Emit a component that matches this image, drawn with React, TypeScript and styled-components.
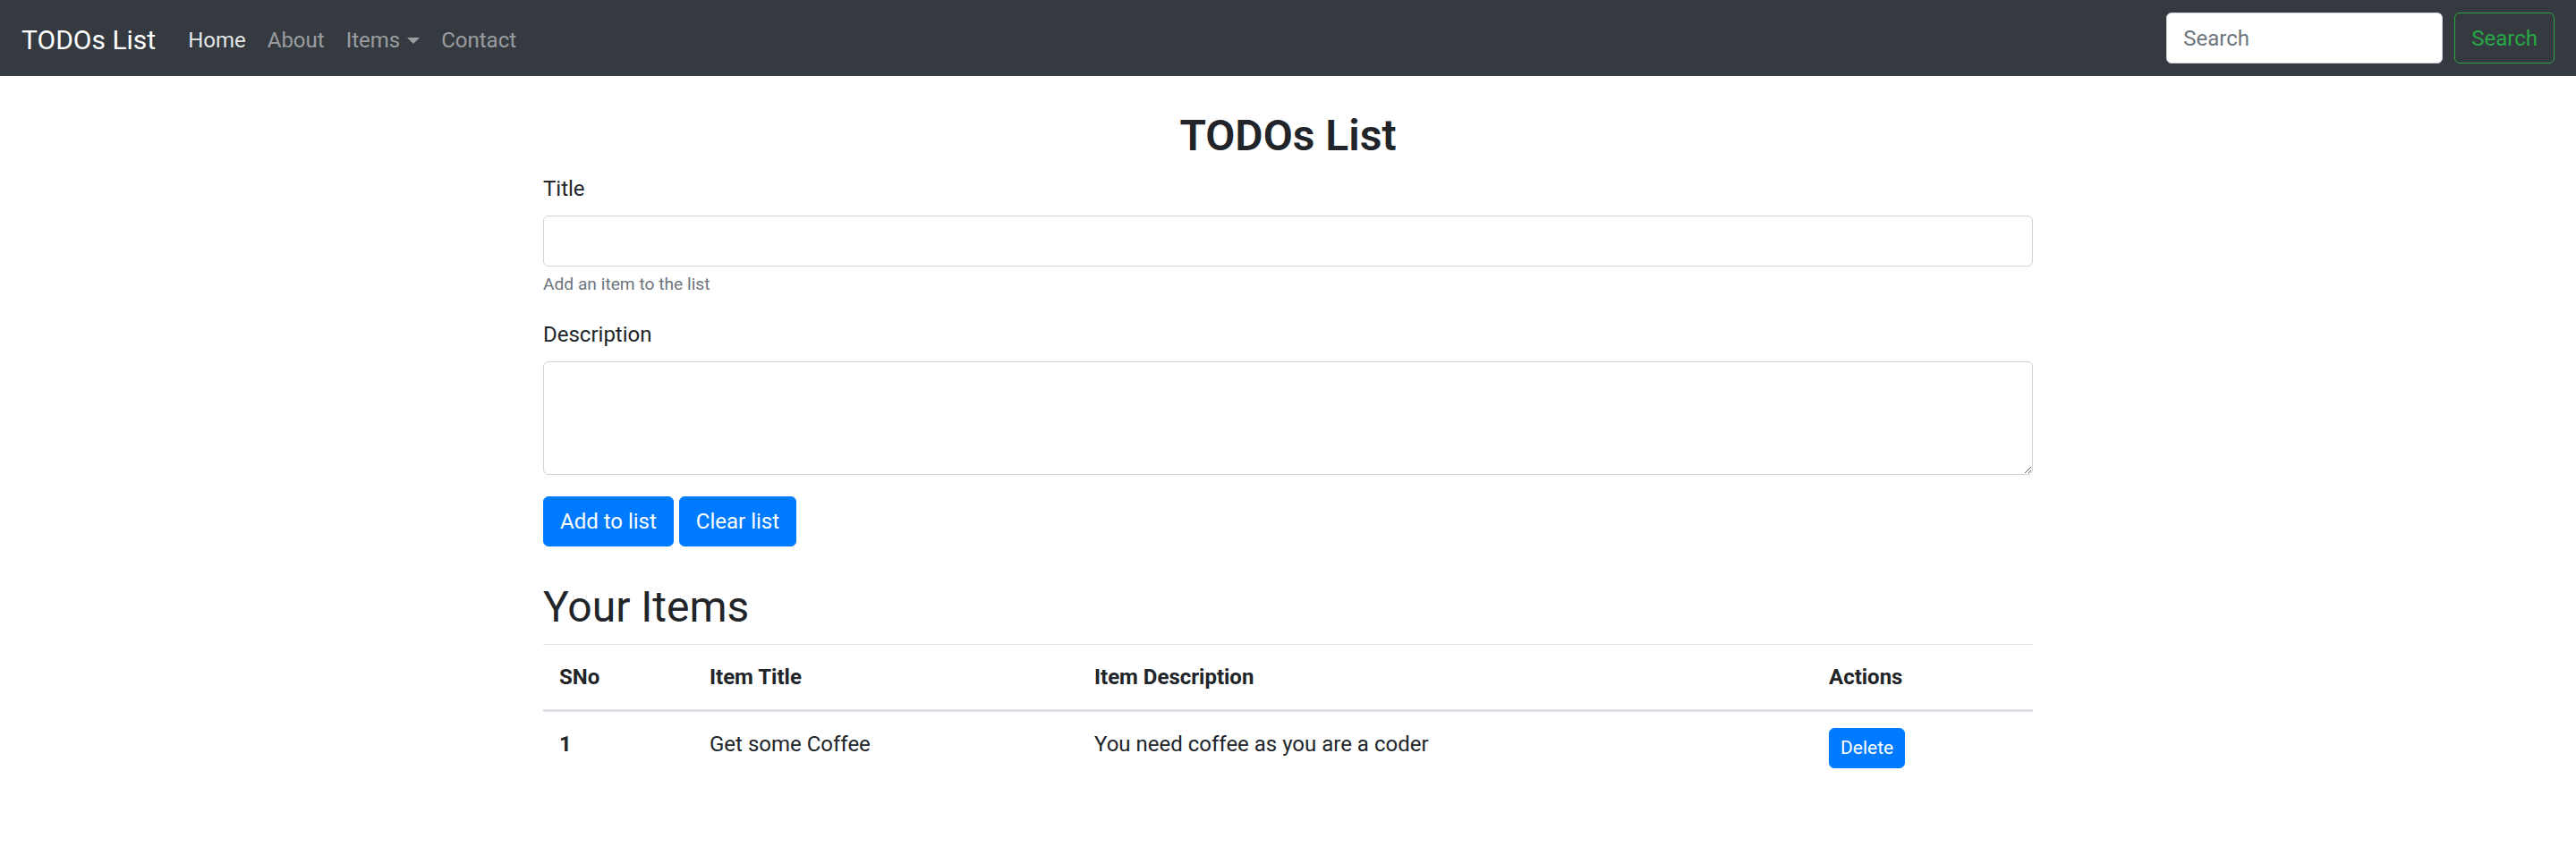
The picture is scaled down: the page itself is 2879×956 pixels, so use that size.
import React from "react";
import styled, { createGlobalStyle } from "styled-components";

const Global = createGlobalStyle`
  * { box-sizing: border-box; }
  body {
    margin: 0;
    background: #fff;
    color: #212529;
    font-family: Roboto, "Noto Sans", "Liberation Sans", sans-serif;
    font-size: 24px;
    line-height: 1.5;
  }
`;

const Navbar = styled.nav`
  display: flex;
  align-items: center;
  justify-content: space-between;
  height: 85px;
  padding: 12px 24px;
  background: #343a40;
`;

const Left = styled.div`
  display: flex;
  align-items: center;
  padding-top: 4px;
`;

const Brand = styled.a`
  font-size: 30px;
  line-height: 45px;
  padding: 7.5px 0;
  margin-right: 24px;
  color: #fff;
  text-decoration: none;
  white-space: nowrap;
`;

const NavList = styled.ul`
  display: flex;
  list-style: none;
  margin: 0;
  padding: 0;
`;

const NavLink = styled.a<{ $active?: boolean }>`
  display: flex;
  align-items: center;
  padding: 12px 12px;
  line-height: 36px;
  color: ${(p) => (p.$active ? "rgba(255,255,255,0.9)" : "rgba(255,255,255,0.5)")};
  text-decoration: none;
  white-space: nowrap;
`;

const Caret = styled.span`
  display: inline-block;
  margin-left: 8px;
  margin-top: 2px;
  width: 0;
  height: 0;
  border-top: 7px solid rgba(255, 255, 255, 0.5);
  border-left: 7px solid transparent;
  border-right: 7px solid transparent;
`;

const SearchForm = styled.form`
  display: flex;
  align-items: center;
  gap: 13px;
`;

const SearchInput = styled.input`
  width: 309px;
  height: 57px;
  padding: 9px 18px;
  font: inherit;
  font-size: 24px;
  color: #495057;
  background: #fff;
  border: 1.5px solid #ced4da;
  border-radius: 6px;
  outline: none;
  &::placeholder { color: #6c757d; }
`;

const OutlineButton = styled.button`
  height: 57px;
  padding: 9px 18px;
  font: inherit;
  font-size: 24px;
  line-height: 36px;
  color: #28a745;
  background: transparent;
  border: 1.5px solid #28a745;
  border-radius: 6px;
`;

const Container = styled.main`
  width: 1665px;
  margin: 0 auto;
  padding-top: 38px;
`;

const Heading = styled.h2<{ $center?: boolean; $weight?: number }>`
  margin: 0 0 12px;
  font-size: 48px;
  line-height: 57.6px;
  font-weight: ${(p) => p.$weight ?? 400};
  text-align: ${(p) => (p.$center ? "center" : "left")};
`;

const FormGroup = styled.div`
  margin-bottom: 24px;
`;

const Label = styled.label`
  display: block;
  margin-bottom: 12px;
  line-height: 36px;
`;

const TextInput = styled.input`
  display: block;
  width: 100%;
  height: 57px;
  padding: 9px 18px;
  font: inherit;
  border: 1.5px solid #ced4da;
  border-radius: 6px;
  outline: none;
`;

const TextArea = styled.textarea`
  display: block;
  width: 100%;
  height: 127px;
  padding: 9px 18px;
  font: inherit;
  border: 1.5px solid #ced4da;
  border-radius: 6px;
  outline: none;
`;

const Help = styled.small`
  display: block;
  margin-top: 6px;
  font-size: 19.2px;
  line-height: 28.8px;
  color: #6c757d;
`;

const ButtonRow = styled.div`
  display: flex;
  gap: 6px;
  margin-bottom: 39px;
`;

const PrimaryButton = styled.button<{ $small?: boolean }>`
  padding: ${(p) => (p.$small ? "6px 12px" : "9px 18px")};
  font: inherit;
  font-size: ${(p) => (p.$small ? "21px" : "24px")};
  line-height: ${(p) => (p.$small ? "31.5px" : "36px")};
  color: #fff;
  background: #007bff;
  border: 1.5px solid #007bff;
  border-radius: 6px;
`;

const Table = styled.table`
  width: 100%;
  border-collapse: collapse;
  table-layout: fixed;
`;

const Th = styled.th<{ $w?: number }>`
  width: ${(p) => (p.$w ? `${p.$w}px` : "auto")};
  padding: 18px;
  text-align: left;
  vertical-align: top;
  font-weight: 700;
  line-height: 36px;
  border-top: 1.5px solid #dee2e6;
`;

const HeadTh = styled(Th)`
  border-bottom: 3px solid #dee2e6;
`;

const Td = styled.td`
  padding: 18px;
  vertical-align: top;
  line-height: 36px;
  border-top: 1.5px solid #dee2e6;
`;

const items = [
  { sno: 1, title: "Get some Coffee", desc: "You need coffee as you are a coder" },
];

export default function App() {
  return (
    <>
      <Global />
      <Navbar>
        <Left>
          <Brand href="#">TODOs List</Brand>
          <NavList>
            <li><NavLink $active href="#">Home</NavLink></li>
            <li><NavLink href="#">About</NavLink></li>
            <li><NavLink href="#">Items<Caret /></NavLink></li>
            <li><NavLink href="#">Contact</NavLink></li>
          </NavList>
        </Left>
        <SearchForm onSubmit={(e) => e.preventDefault()}>
          <SearchInput placeholder="Search" />
          <OutlineButton type="submit">Search</OutlineButton>
        </SearchForm>
      </Navbar>
      <Container>
        <Heading $center $weight={600}>TODOs List</Heading>
        <FormGroup>
          <Label>Title</Label>
          <TextInput />
          <Help>Add an item to the list</Help>
        </FormGroup>
        <FormGroup>
          <Label>Description</Label>
          <TextArea rows={3} />
        </FormGroup>
        <ButtonRow>
          <PrimaryButton>Add to list</PrimaryButton>
          <PrimaryButton>Clear list</PrimaryButton>
        </ButtonRow>
        <Heading>Your Items</Heading>
        <Table>
          <thead>
            <tr>
              <HeadTh $w={168}>SNo</HeadTh>
              <HeadTh $w={430}>Item Title</HeadTh>
              <HeadTh $w={821}>Item Description</HeadTh>
              <HeadTh>Actions</HeadTh>
            </tr>
          </thead>
          <tbody>
            {items.map((it) => (
              <tr key={it.sno}>
                <Th scope="row">{it.sno}</Th>
                <Td>{it.title}</Td>
                <Td>{it.desc}</Td>
                <Td><PrimaryButton $small>Delete</PrimaryButton></Td>
              </tr>
            ))}
          </tbody>
        </Table>
      </Container>
    </>
  );
}
